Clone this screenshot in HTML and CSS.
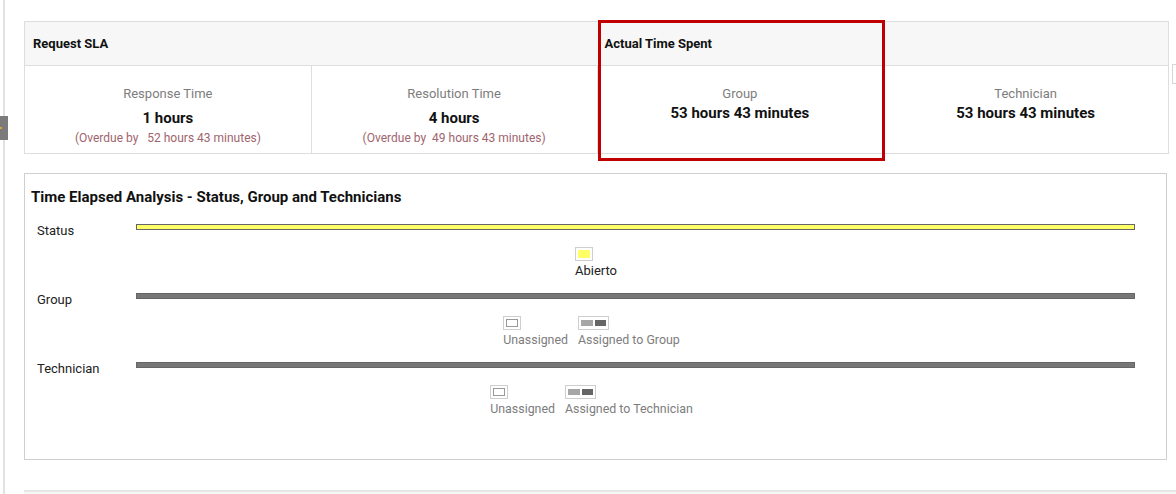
FILE: index.html
```html
<!DOCTYPE html>
<html lang="en">

<head>
    <meta charset="UTF-8">
    <title>Request SLA</title>
    <link rel="stylesheet" href="styles.css">
</head>

<body>
    <div class="page">
        <div class="rail">
            <span class="rail-tab"></span>
        </div>

        <div class="content">
            <div class="sla-table">
                <div class="sla-head">Request SLA</div>
                <div class="sla-head">Actual Time Spent</div>

                <div class="sla-cell">
                    <div class="sla-label">Response Time</div>
                    <div class="sla-value">1 hours</div>
                    <div class="sla-overdue">(Overdue by &nbsp; 52 hours 43 minutes)</div>
                </div>
                <div class="sla-cell">
                    <div class="sla-label">Resolution Time</div>
                    <div class="sla-value">4 hours</div>
                    <div class="sla-overdue">(Overdue by &nbsp;49 hours 43 minutes)</div>
                </div>
                <div class="sla-cell">
                    <div class="sla-label">Group</div>
                    <div class="spent-value">53 hours 43 minutes</div>
                </div>
                <div class="sla-cell">
                    <div class="sla-label">Technician</div>
                    <div class="spent-value">53 hours 43 minutes</div>
                </div>

                <div class="highlight"></div>
            </div>

            <div class="side-tab"></div>

            <div class="analysis">
                <h3>Time Elapsed Analysis - Status, Group and Technicians</h3>

                <div class="track">
                    <div class="track-row">
                        <span class="track-label">Status</span>
                        <div class="bar-wrap"><div class="bar bar-status"></div></div>
                    </div>
                    <div class="legend legend-status">
                        <div class="legend-item">
                            <span class="swatch"><span class="fill-yellow"></span></span>
                            <span class="legend-text dark">Abierto</span>
                        </div>
                    </div>
                </div>

                <div class="track">
                    <div class="track-row">
                        <span class="track-label">Group</span>
                        <div class="bar-wrap"><div class="bar bar-gray"></div></div>
                    </div>
                    <div class="legend">
                        <div class="legend-item">
                            <span class="swatch"><span class="fill-empty"></span></span>
                            <span class="legend-text">Unassigned</span>
                        </div>
                        <div class="legend-item">
                            <span class="swatch swatch-wide"><span class="fill-light"></span><span class="fill-dark"></span></span>
                            <span class="legend-text">Assigned to Group</span>
                        </div>
                    </div>
                </div>

                <div class="track">
                    <div class="track-row">
                        <span class="track-label">Technician</span>
                        <div class="bar-wrap"><div class="bar bar-gray"></div></div>
                    </div>
                    <div class="legend">
                        <div class="legend-item">
                            <span class="swatch"><span class="fill-empty"></span></span>
                            <span class="legend-text">Unassigned</span>
                        </div>
                        <div class="legend-item">
                            <span class="swatch swatch-wide"><span class="fill-light"></span><span class="fill-dark"></span></span>
                            <span class="legend-text">Assigned to Technician</span>
                        </div>
                    </div>
                </div>
            </div>

            <div class="next-section"></div>
        </div>
    </div>
</body>

</html>
```

FILE: styles.css
```css
body {
    margin: 0;
    padding: 0;
    font-family: Roboto, "Liberation Sans", Arial, sans-serif;
    background-color: #fff;
    color: #222;
    overflow: hidden;
}

.page {
    display: flex;
    height: 494px;
}

.rail {
    position: relative;
    width: 5px;
    border-right: 2px solid #e2e2e2;
    box-sizing: border-box;
    flex-shrink: 0;
}

.rail-tab {
    position: absolute;
    left: 0;
    top: 116px;
    width: 8px;
    height: 24px;
    background-color: #7b7b7b;
}

.rail-tab::before {
    content: "";
    position: absolute;
    left: 0;
    top: 11px;
    width: 2px;
    height: 2px;
    background-color: #d9a040;
}

.content {
    position: relative;
    flex: 1;
    padding: 21px 0 0 19px;
}

/* SLA table */

.sla-table {
    position: relative;
    width: 1143px;
    display: grid;
    grid-template-columns: repeat(4, 1fr);
    border: 1px solid #dedede;
}

.sla-head {
    grid-column: span 2;
    height: 43px;
    line-height: 44px;
    padding-left: 8px;
    background-color: #f7f7f7;
    border-bottom: 1px solid #dedede;
    font-size: 13px;
    font-weight: bold;
    color: #111;
}

.sla-cell {
    height: 87px;
    text-align: center;
    border-left: 1px solid #dedede;
}

.sla-cell:nth-child(3) {
    border-left: none;
}

.sla-label {
    margin-top: 20px;
    font-size: 13px;
    line-height: 16px;
    color: #7d7d7d;
}

.sla-value {
    margin-top: 7px;
    font-size: 15px;
    font-weight: bold;
    line-height: 18px;
    color: #111;
}

.sla-overdue {
    margin-top: 4px;
    font-size: 12px;
    line-height: 15px;
    color: #a0646e;
}

.spent-value {
    margin-top: 2px;
    font-size: 15px;
    font-weight: bold;
    line-height: 18px;
    color: #111;
}

.highlight {
    position: absolute;
    left: 573px;
    top: -2px;
    width: 281px;
    height: 135px;
    border: 3px solid #c00000;
}

.side-tab {
    position: absolute;
    right: -8px;
    top: 64px;
    width: 10px;
    height: 18px;
    border: 1px solid #d6d6d6;
    background-color: #fff;
}

/* Analysis panel */

.analysis {
    width: 1141px;
    height: 285px;
    margin-top: 19px;
    border: 1px solid #cfcfcf;
}

.analysis h3 {
    margin: 14px 0 15px 6px;
    font-size: 15px;
    line-height: 18px;
    font-weight: bold;
    color: #111;
}

.track {
    height: 56px;
    margin-bottom: 13px;
}

.track-row {
    display: flex;
    height: 16px;
}

.track-label {
    width: 99px;
    padding-left: 12px;
    padding-top: 2px;
    font-size: 13px;
    line-height: 16px;
    color: #222;
}

.bar-wrap {
    width: 999px;
    padding-top: 3px;
}

.bar {
    height: 4px;
    border: 1px solid #666;
}

.bar-status {
    background-color: #ffff66;
}

.bar-gray {
    background-color: #777;
}

.legend {
    display: flex;
    justify-content: center;
    gap: 10px;
    margin-top: 10px;
    padding-right: 8px;
}

.legend-status {
    padding-right: 0;
    padding-left: 1px;
}

.legend-item {
    display: flex;
    flex-direction: column;
    align-items: flex-start;
}

.swatch {
    display: flex;
    gap: 2px;
    width: 12px;
    height: 8px;
    padding: 2px;
    border: 1px solid #cfcfcf;
}

.swatch-wide {
    width: 25px;
}

.fill-yellow {
    flex: 1;
    background-color: #ffff66;
}

.fill-empty {
    flex: 1;
    border: 1px solid #999;
    background-color: #fff;
}

.fill-light {
    flex: 1;
    margin: 1px 0;
    background-color: #a6a6a6;
}

.fill-dark {
    flex: 1;
    margin: 1px 0;
    background-color: #666;
}

.legend-text {
    margin-top: 2px;
    font-size: 12.4px;
    line-height: 16px;
    color: #7d7d7d;
}

.legend-text.dark {
    font-size: 13px;
    color: #222;
}

.next-section {
    margin-top: 30px;
    height: 20px;
    border-top: 2px solid #e6e6e6;
    background-color: #f7f7f7;
}
```
